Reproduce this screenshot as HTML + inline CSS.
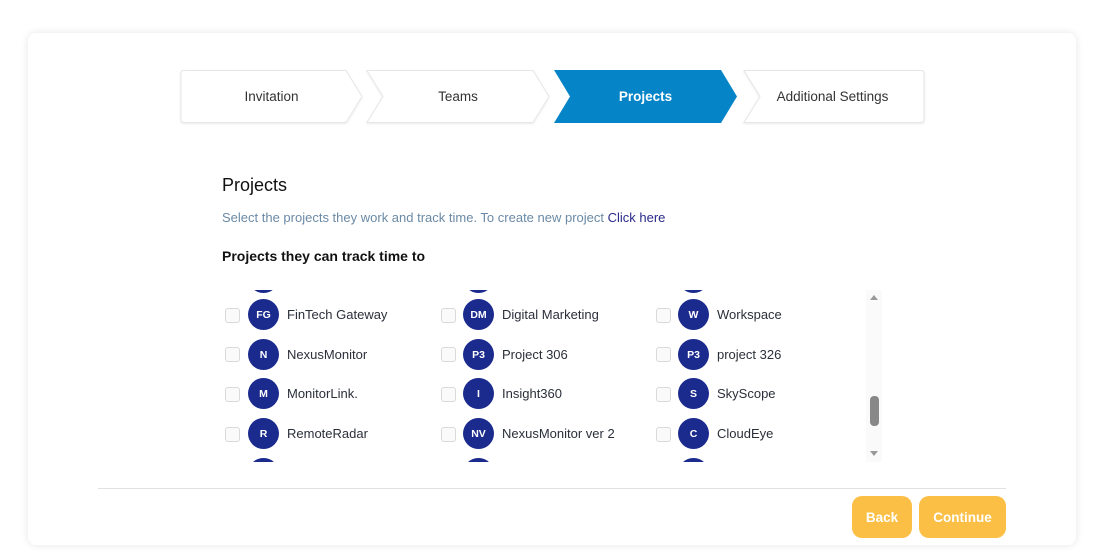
<!DOCTYPE html>
<html><head><style>
*{box-sizing:border-box;margin:0;padding:0}
body{width:1110px;height:558px;background:#fff;font-family:"Liberation Sans",sans-serif;position:relative;overflow:hidden}
.card{position:absolute;left:28px;top:33px;width:1048px;height:512px;background:#fff;border-radius:8px;box-shadow:0 0 8px rgba(0,0,0,.1)}
.abs{position:absolute}
.step{position:absolute;top:70px;height:53px;font-size:13.5px;color:#333;display:flex;align-items:center;justify-content:center}
.row{position:absolute;font-size:13px;color:#2a2f3a}
.cb{position:absolute;width:15px;height:15px;border:1px solid #d9d9d9;border-radius:3px;background:#fafafa}
.av{position:absolute;width:31px;height:31px;border-radius:50%;background:#1b2a8d;color:#fff;font-size:10.5px;font-weight:bold;display:flex;align-items:center;justify-content:center}
.lb{position:absolute;white-space:nowrap}
.btn{position:absolute;top:496px;height:42px;background:#fbbf45;color:#fff;border-radius:10px;font-size:13.5px;font-weight:bold;display:flex;align-items:center;justify-content:center}
</style></head><body>
<div class="card"></div>
<svg class="abs" style="left:0;top:0" width="1110" height="558">
<defs><filter id="sh" x="-5%" y="-10%" width="110%" height="130%"><feDropShadow dx="0" dy="1" stdDeviation="1" flood-color="#000" flood-opacity="0.08"/></filter></defs>
<g stroke="#e6e6ea" stroke-width="1" fill="#fff" filter="url(#sh)">
<path d="M184 70.5H346L362 96.5L346 122.5H184Q181 122.5 181 119.5V73.5Q181 70.5 184 70.5Z"/>
<path d="M367 70.5H533L549 96.5L533 122.5H367L383 96.5Z"/>
<path d="M744 70.5H921Q924 70.5 924 73.5V119.5Q924 122.5 921 122.5H744L760 96.5Z"/>
</g>
<path d="M554 70H721L737 96.5L721 123H554L570 96.5Z" fill="#0585c8"/>
</svg>
<div class="step" style="left:181px;width:181px">Invitation</div>
<div class="step" style="left:367px;width:182px">Teams</div>
<div class="step" style="left:554px;width:183px;color:#fff;font-weight:bold">Projects</div>
<div class="step" style="left:741px;width:183px">Additional Settings</div>
<div class="abs" style="left:222px;top:175px;font-size:18px;color:#111">Projects</div>
<div class="abs" style="left:222px;top:210px;font-size:13px;color:#6b8aa6">Select the projects they work and track time. To create new project <span style="color:#2a2a8a">Click here</span></div>
<div class="abs" style="left:222px;top:248px;font-size:14px;font-weight:bold;color:#111">Projects they can track time to</div>
<div class="abs" style="left:215px;top:290px;width:670px;height:172px;overflow:hidden">
<div class="abs" style="left:651px;top:0;width:16px;height:172px;background:#fafafa"></div>
<div class="abs" style="left:655px;top:5px;width:0;height:0;border-left:4px solid transparent;border-right:4px solid transparent;border-bottom:5px solid #999"></div>
<div class="abs" style="left:655px;top:161px;width:0;height:0;border-left:4px solid transparent;border-right:4px solid transparent;border-top:5px solid #999"></div>
<div class="abs" style="left:655px;top:106px;width:9px;height:30px;background:#888;border-radius:4px"></div>
</div>
<div class="abs" style="left:98px;top:488px;width:908px;height:1px;background:#e2e2e2"></div>
<div class="btn" style="left:852px;width:60px">Back</div>
<div class="btn" style="left:919px;width:87px">Continue</div>
<div class="abs" style="left:215px;top:290px;width:640px;height:172px;overflow:hidden">
<div class="av" style="left:33px;top:-28px"></div><div class="av" style="left:248px;top:-28px"></div><div class="av" style="left:463px;top:-28px"></div>
<div class="av" style="left:33px;top:168px"></div><div class="av" style="left:248px;top:168px"></div><div class="av" style="left:463px;top:168px"></div>
</div>
<div class="row">
<div class="cb" style="left:225px;top:308px"></div><div class="av" style="left:248px;top:299px">FG</div><div class="lb" style="left:287px;top:307px">FinTech Gateway</div>
<div class="cb" style="left:225px;top:347px"></div><div class="av" style="left:248px;top:339px">N</div><div class="lb" style="left:287px;top:347px">NexusMonitor</div>
<div class="cb" style="left:225px;top:387px"></div><div class="av" style="left:248px;top:378px">M</div><div class="lb" style="left:287px;top:386px">MonitorLink.</div>
<div class="cb" style="left:225px;top:427px"></div><div class="av" style="left:248px;top:418px">R</div><div class="lb" style="left:287px;top:426px">RemoteRadar</div>
<div class="cb" style="left:441px;top:308px"></div><div class="av" style="left:463px;top:299px">DM</div><div class="lb" style="left:502px;top:307px">Digital Marketing</div>
<div class="cb" style="left:441px;top:347px"></div><div class="av" style="left:463px;top:339px">P3</div><div class="lb" style="left:502px;top:347px">Project 306</div>
<div class="cb" style="left:441px;top:387px"></div><div class="av" style="left:463px;top:378px">I</div><div class="lb" style="left:502px;top:386px">Insight360</div>
<div class="cb" style="left:441px;top:427px"></div><div class="av" style="left:463px;top:418px">NV</div><div class="lb" style="left:502px;top:426px">NexusMonitor ver 2</div>
<div class="cb" style="left:656px;top:308px"></div><div class="av" style="left:678px;top:299px">W</div><div class="lb" style="left:717px;top:307px">Workspace</div>
<div class="cb" style="left:656px;top:347px"></div><div class="av" style="left:678px;top:339px">P3</div><div class="lb" style="left:717px;top:347px">project 326</div>
<div class="cb" style="left:656px;top:387px"></div><div class="av" style="left:678px;top:378px">S</div><div class="lb" style="left:717px;top:386px">SkyScope</div>
<div class="cb" style="left:656px;top:427px"></div><div class="av" style="left:678px;top:418px">C</div><div class="lb" style="left:717px;top:426px">CloudEye</div>
</div>
</body></html>
